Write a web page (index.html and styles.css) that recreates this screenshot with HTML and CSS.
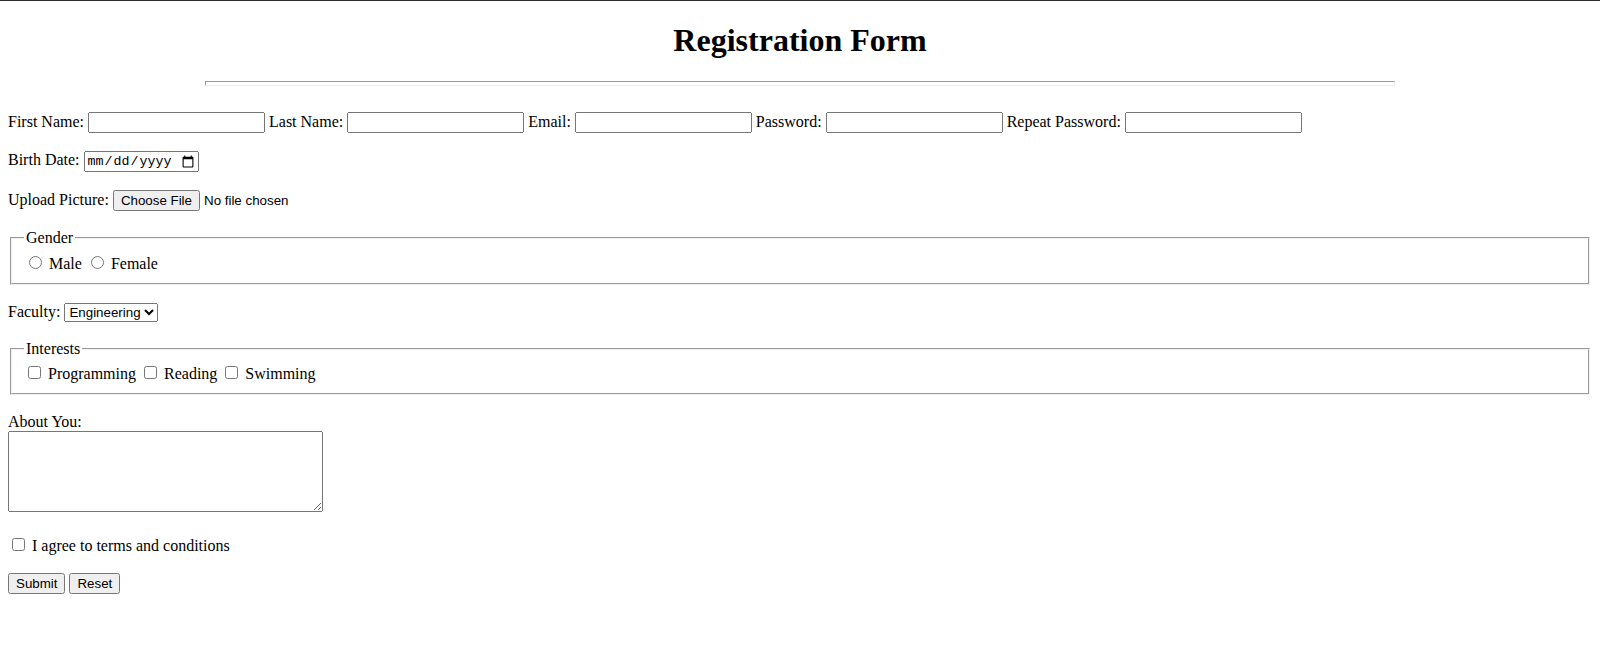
FILE: index.html
```html
<!DOCTYPE html>
<html>
<head>
<meta charset="utf-8">
<title>Registration Form</title>
<link rel="stylesheet" href="styles.css">
</head>
<body>
<h1 class="title">Registration Form</h1>
<hr class="rule">
<form class="form">
  <br>
  <label>First Name: <input type="text" class="field"></label>
  <label>Last Name: <input type="text" class="field"></label>
  <label>Email: <input type="email" class="field"></label>
  <label>Password: <input type="password" class="field"></label>
  <label>Repeat Password: <input type="password" class="field"></label>
  <br><br>
  <label>Birth Date: <input type="date" class="date"></label>
  <br><br>
  <label>Upload Picture: <input type="file" class="file"></label>
  <br><br>
  <fieldset class="group">
    <legend class="legend">Gender</legend>
    <label><input type="radio" name="gender"> Male</label>
    <label><input type="radio" name="gender"> Female</label>
  </fieldset>
  <br>
  <label>Faculty:
    <select class="select">
      <option>Engineering</option>
      <option>Science</option>
      <option>Arts</option>
    </select>
  </label>
  <br><br>
  <fieldset class="group">
    <legend class="legend">Interests</legend>
    <label><input type="checkbox"> Programming</label>
    <label><input type="checkbox"> Reading</label>
    <label><input type="checkbox"> Swimming</label>
  </fieldset>
  <br>
  <label>About You:<br><textarea rows="5" cols="40" class="about"></textarea></label>
  <br><br>
  <label><input type="checkbox"> I agree to terms and conditions</label>
  <br><br>
  <input type="submit" value="Submit" class="btn">
  <input type="reset" value="Reset" class="btn">
</form>
</body>
</html>
```
FILE: styles.css
```css
html {
  border-top: 1px solid #2b2b2b;
}
body {
  margin: 0;
  padding: 0 8px 8px;
  font-family: "Liberation Serif", "Times New Roman", serif;
  font-size: 16px;
  color: #000;
  background: #fff;
}
.title {
  text-align: center;
  font-size: 32px;
  font-weight: bold;
  margin: 21.4px 0 21.4px;
}
.rule {
  width: 75%;
  height: 3px;
  margin: 0 auto 8px;
  border-style: solid;
  border-width: 1px;
  border-color: #9a9a9a #eeeeee #eeeeee #9a9a9a;
}
.form {
  margin: 0;
}
.field {
  width: 177px;
  box-sizing: border-box;
  font-family: "Liberation Sans", Arial, sans-serif;
}
.date {
  width: 115px;
  box-sizing: border-box;
  font-family: "Liberation Mono", monospace;
}
.select {
  font-family: "Liberation Sans", Arial, sans-serif;
}
.file, .btn {
  font-family: "Liberation Sans", Arial, sans-serif;
}
.about {
  width: 315px;
  height: 81px;
  box-sizing: border-box;
  margin-bottom: 1px;
  font-family: "Liberation Mono", monospace;
}
.group {
  margin: 0 2px;
}
```
